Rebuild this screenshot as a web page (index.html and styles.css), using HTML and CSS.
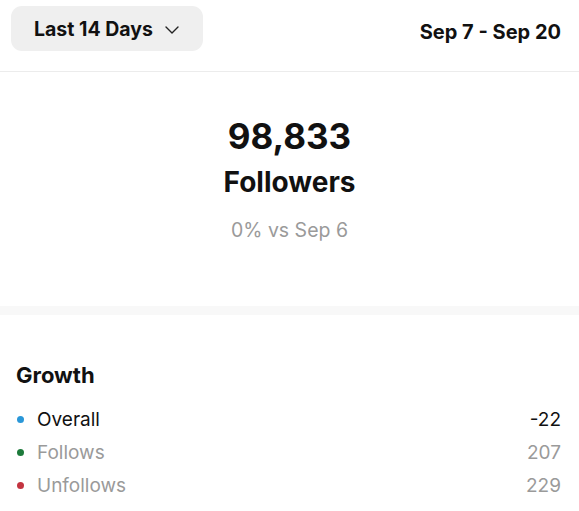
FILE: index.html
```html
<!DOCTYPE html>
<html>
<head>
<meta charset="utf-8">
<link rel="stylesheet" href="styles.css">
</head>
<body>
<div class="page">
  <header class="topbar">
    <button class="range">
      <span>Last 14 Days</span>
      <svg class="chev" width="14" height="8" viewBox="0 0 14 8"><path d="M1 1 L7 7 L13 1" fill="none" stroke="#222" stroke-width="1.4" stroke-linecap="round" stroke-linejoin="round"/></svg>
    </button>
    <div class="dates">Sep 7 - Sep 20</div>
  </header>
  <section class="summary">
    <div class="count">98,833</div>
    <div class="label">Followers</div>
    <div class="compare">0% vs Sep 6</div>
  </section>
  <div class="band"></div>
  <section class="growth">
    <h2 class="title">Growth</h2>
    <ul class="rows">
      <li class="row main"><span class="name"><i class="dot blue"></i>Overall</span><span class="val">-22</span></li>
      <li class="row"><span class="name"><i class="dot green"></i>Follows</span><span class="val">207</span></li>
      <li class="row"><span class="name"><i class="dot red"></i>Unfollows</span><span class="val">229</span></li>
    </ul>
  </section>
</div>
</body>
</html>
```
FILE: styles.css
```css
* { box-sizing: border-box; }
html, body { margin: 0; padding: 0; background: #fff; }
body { font-family: Inter, "Noto Sans", sans-serif; color: #111; }
.page { width: 579px; height: 511px; overflow: hidden; }
.topbar {
  display: flex; justify-content: space-between; align-items: flex-start;
  height: 72px; padding: 6px 18px 0 11px;
  border-bottom: 1px solid #ececec;
}
.range {
  display: flex; align-items: center; gap: 12px;
  height: 45px; width: 192px; padding: 0 0 0 23px;
  background: #efefef; border: none; border-radius: 11px;
  font-family: inherit; font-size: 19.5px; font-weight: 700; color: #111;
}
.chev { margin-top: 2px; }
.dates { font-size: 20px; font-weight: 700; line-height: 24px; margin-top: 14px; }
.summary { display: flex; flex-direction: column; align-items: center; height: 234px; padding-top: 43px; }
.count { font-size: 35px; font-weight: 700; line-height: 42px; }
.label { font-size: 28px; font-weight: 700; line-height: 32px; margin-top: 9px; }
.compare { font-size: 19.5px; color: #9a9a9a; line-height: 24px; margin-top: 20px; }
.band { height: 9px; background: #f8f8f8; }
.growth { padding: 0 18px 0 16px; }
.title { margin: 47px 0 0; font-size: 22px; font-weight: 700; line-height: 26px; }
.rows { list-style: none; margin: 15px 0 0; padding: 0; }
.row { display: flex; justify-content: space-between; align-items: center; height: 33px; font-size: 19px; color: #9a9a9a; }
.row.main { color: #111; }
.name { display: flex; align-items: center; gap: 13px; }
.dot { display: inline-block; width: 7px; height: 7px; border-radius: 50%; margin-left: 1px; }
.blue { background: #2a97d8; }
.green { background: #1d7a3b; }
.red { background: #c33440; }
```
